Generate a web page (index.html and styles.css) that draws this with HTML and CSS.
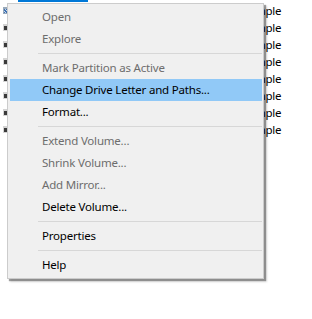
FILE: index.html
```html
<!DOCTYPE html>
<html>
<head>
<meta charset="utf-8">
<link rel="stylesheet" href="styles.css">
</head>
<body>
<div class="page">
  <div class="topbar"></div>
  <div class="list">
    <div class="row"><span class="vicon hatched"></span><span class="layout">Simple</span></div>
    <div class="row"><span class="vicon"></span><span class="layout">Simple</span></div>
    <div class="row"><span class="vicon"></span><span class="layout">Simple</span></div>
    <div class="row"><span class="vicon"></span><span class="layout">Simple</span></div>
    <div class="row"><span class="vicon"></span><span class="layout">Simple</span></div>
    <div class="row"><span class="vicon"></span><span class="layout">Simple</span></div>
    <div class="row"><span class="vicon"></span><span class="layout">Simple</span></div>
    <div class="row"><span class="vicon"></span><span class="layout">Simple</span></div>
  </div>

  <div class="menu">
    <div class="item disabled">Open</div>
    <div class="item disabled">Explore</div>
    <div class="sep"></div>
    <div class="item disabled">Mark Partition as Active</div>
    <div class="item active">Change Drive Letter and Paths...</div>
    <div class="item">Format...</div>
    <div class="sep"></div>
    <div class="item disabled">Extend Volume...</div>
    <div class="item disabled">Shrink Volume...</div>
    <div class="item disabled">Add Mirror...</div>
    <div class="item">Delete Volume...</div>
    <div class="sep"></div>
    <div class="item">Properties</div>
    <div class="sep"></div>
    <div class="item">Help</div>
  </div>
</div>
</body>
</html>
```

FILE: styles.css
```css
html, body {
  margin: 0;
  padding: 0;
  background: #ffffff;
}

body {
  font-family: "Noto Sans", "Open Sans", sans-serif;
  font-size: 11.5px;
  letter-spacing: -0.2px;
  color: #000;
}

.page {
  position: relative;
  width: 312px;
  height: 319px;
  overflow: hidden;
}

.topbar {
  margin-left: 18px;
  width: 70px;
  height: 2px;
  background: #0078d7;
}

.list {
  display: flex;
  flex-direction: column;
}

.row {
  height: 17px;
  display: flex;
  align-items: center;
  line-height: 17px;
}

.vicon {
  width: 4px;
  height: 4px;
  margin-left: 3px;
  background: #3a3a3a;
  border: 1px solid #d4d4d4;
  border-top-width: 2px;
}

.vicon.hatched {
  background: repeating-linear-gradient(45deg, #3c6fb0 0 1px, #c8d8ee 1px 2px);
  border-color: #9ab;
}

.layout {
  margin-left: 237px;
}

.menu {
  position: absolute;
  left: 7px;
  top: 3px;
  width: 257px;
  box-sizing: border-box;
  background: #f0f0f0;
  border: 1px solid #cccccc;
  padding: 2px 1px 2px 2px;
  box-shadow: 2px 2px 1px rgba(0, 0, 0, 0.35), 3px 3px 2px rgba(0, 0, 0, 0.15);
}

.item {
  height: 22px;
  line-height: 22px;
  padding-left: 32px;
  white-space: nowrap;
  color: #000;
}

.item.disabled {
  color: #6d6d6d;
}

.item.active {
  background: #91c9f7;
}

.sep {
  height: 1px;
  margin: 3px 0 3px 28px;
  background: #d7d7d7;
}
```
